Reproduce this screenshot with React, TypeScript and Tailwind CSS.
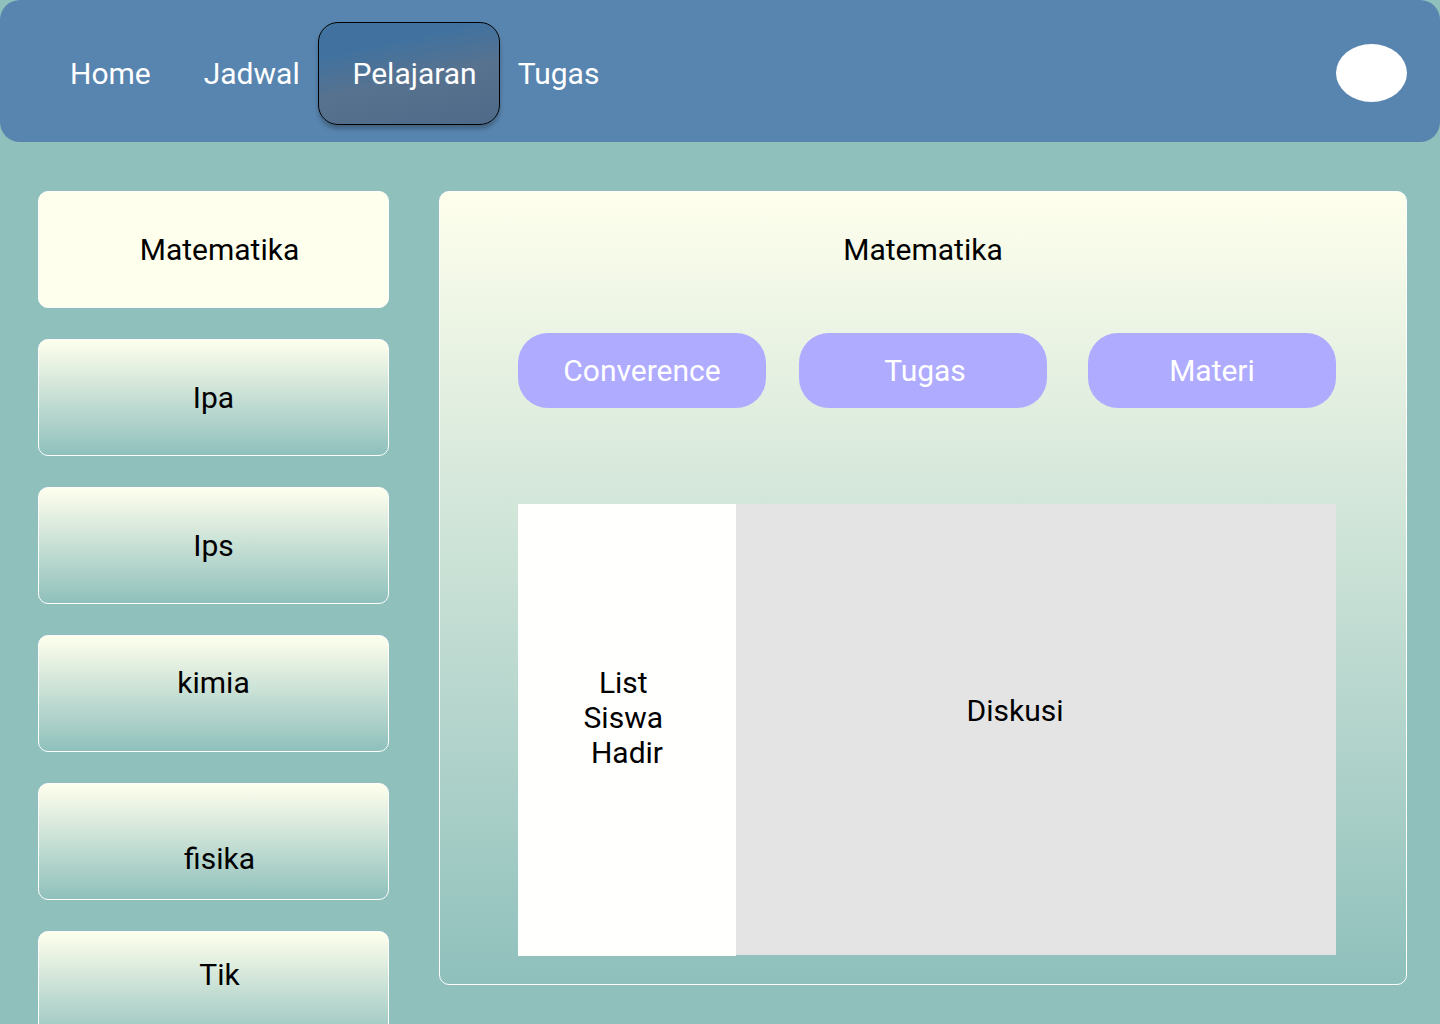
const lessons = [
  { name: "Matematika", look: "bg-[#ffffed] pl-3" },
  { name: "Ipa", look: "bg-linear-to-b/srgb from-[#ffffed] to-[#8fc0bc]" },
  { name: "Ips", look: "bg-linear-to-b/srgb from-[#ffffed] to-[#8fc0bc]" },
  { name: "kimia", look: "bg-linear-to-b/srgb from-[#ffffed] to-[#8fc0bc] pb-[22px]" },
  { name: "fisika", look: "bg-linear-to-b/srgb from-[#ffffed] to-[#8fc0bc] pt-[34px] pl-3" },
  { name: "Tik", look: "bg-linear-to-b/srgb from-[#ffffed] to-[#8fc0bc] pb-[30px] pl-3" },
];

const actions = [
  { name: "Converence", look: "" },
  { name: "Tugas", look: "ml-[33px] pl-1" },
  { name: "Materi", look: "ml-auto" },
];

export default function App() {
  return (
    <div className="h-screen overflow-hidden bg-[#8fc0bc] font-[Roboto,sans-serif] text-[30px] leading-[35px] text-black">
      <header className="flex h-[142px] items-center justify-between rounded-[20px] bg-[#5885af] pt-1 pr-[33px] pl-[70px] text-white">
        <nav className="flex items-center">
          <a href="#home">Home</a>
          <a href="#jadwal" className="ml-[53px]">Jadwal</a>
          <a
            href="#pelajaran"
            aria-current="page"
            className="ml-[18px] flex h-[103px] w-[182px] items-center justify-end rounded-[20px] border border-black bg-linear-[168deg] from-[#41729f] from-25% via-[#57728f] via-55% to-[#4f6a88] pr-[22px] shadow-[0_4px_4px_rgba(0,0,0,0.25)]"
          >
            Pelajaran
          </a>
          <a href="#tugas" className="ml-[18px]">Tugas</a>
        </nav>
        <button aria-label="Profil" className="h-[58px] w-[71px] rounded-[50%] bg-white" />
      </header>
      <div className="flex items-start gap-[50px] pt-[49px] pr-[33px] pl-[38px]">
        <aside className="flex w-[351px] shrink-0 flex-col gap-[31px]">
          {lessons.map((l) => (
            <button
              key={l.name}
              className={`flex h-[117px] items-center justify-center rounded-[10px] border border-white ${l.look}`}
            >
              {l.name}
            </button>
          ))}
        </aside>
        <main className="min-w-0 flex-1 rounded-[10px] border border-white bg-linear-to-b/srgb from-[#ffffed] to-[#8fc0bc] pt-10 pr-[70px] pb-7 pl-[78px]">
          <h1 className="pr-2 text-center">Matematika</h1>
          <div className="mt-[66px] flex text-white">
            {actions.map((a) => (
              <button key={a.name} className={`h-[75px] w-[248px] rounded-[30px] bg-[#afabff] ${a.look}`}>
                {a.name}
              </button>
            ))}
          </div>
          <div className="mt-24 flex h-[452px]">
            <section className="flex w-[218px] items-center justify-center bg-[#fffffd] pb-[26px] text-center">
              <p className="whitespace-pre">{"List \nSiswa \nHadir"}</p>
            </section>
            <section className="mb-px flex flex-1 items-center justify-center bg-[#e4e4e4] pr-[42px] pb-[38px]">
              <p>Diskusi</p>
            </section>
          </div>
        </main>
      </div>
    </div>
  );
}
